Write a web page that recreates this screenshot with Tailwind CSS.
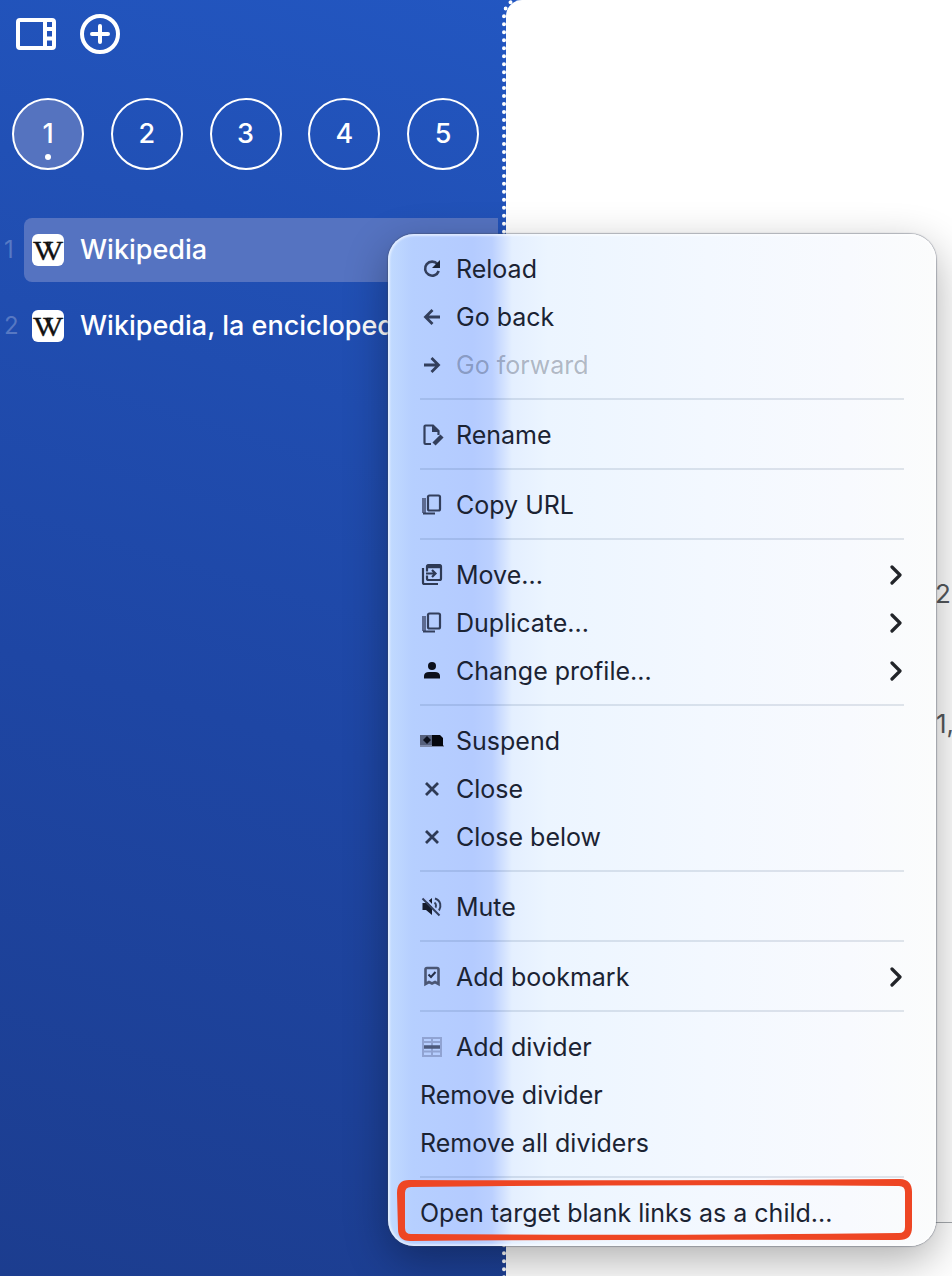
<!DOCTYPE html>
<html lang="en">
<head>
<meta charset="utf-8">
<meta name="viewport" content="width=device-width, initial-scale=1">
<title>Wikipedia</title>
<script src="https://cdn.jsdelivr.net/npm/@tailwindcss/browser@4"></script>
</head>
<body class="font-['Inter','Liberation_Sans',sans-serif]">
<svg class="hidden" aria-hidden="true">
  <symbol id="wiki" viewBox="0 0 32 32">
    <text x="1" y="26" font-family="Liberation Serif, serif" font-size="28" fill="#111" stroke="#111" stroke-width="0.500">V</text>
    <text x="11" y="26" font-family="Liberation Serif, serif" font-size="28" fill="#111" stroke="#111" stroke-width="0.500">V</text>
  </symbol>
  <symbol id="copy" viewBox="0 0 24 24">
    <rect x="8" y="2.500" width="12" height="15" rx="1.500" fill="none" stroke="#333f5c" stroke-width="2.200"/>
    <path d="M4 5v15" stroke="#5d6b91" stroke-width="4" fill="none"/>
    <path d="M3 20.500h12" stroke="#333f5c" stroke-width="2" fill="none"/>
  </symbol>
  <symbol id="cross" viewBox="0 0 24 24">
    <path d="M6 6l12 12M18 6L6 18" stroke="#2e3a55" stroke-width="2.800" fill="none"/>
  </symbol>
  <symbol id="chevron" viewBox="0 0 12 20">
    <path d="M2 2l8 8-8 8" fill="none" stroke="#222429" stroke-width="3.200" stroke-linecap="round" stroke-linejoin="round"/>
  </symbol>
</svg>

<div class="relative flex min-h-screen overflow-hidden bg-[linear-gradient(197deg,#2359c6_0%,#2150b5_28%,#1e46a4_60%,#1c3d8f_100%)]">
  <aside class="w-[502px] shrink-0 text-white">
    <header class="flex items-center gap-6 px-4 pt-3.5">
      <button type="button" aria-label="Toggle sidebar">
        <svg class="block h-10 w-10" viewBox="0 0 40 40" fill="none" stroke="#fff" stroke-width="4">
          <rect x="2" y="6" width="36" height="28" rx="2"/>
          <path d="M29 6v28M29 15h9M29 24.500h9"/>
        </svg>
      </button>
      <button type="button" aria-label="New tab">
        <svg class="block h-10 w-10" viewBox="0 0 40 40" fill="none" stroke="#fff" stroke-width="4" stroke-linecap="round">
          <circle cx="20" cy="20" r="18"/>
          <path d="M20 12v16M12 20h16"/>
        </svg>
      </button>
    </header>
    <nav class="mt-11 flex justify-between pr-[23px] pl-3 text-[27px] font-medium" aria-label="Spaces">
      <button type="button" class="relative h-18 w-18 rounded-full border-2 border-white bg-[#5573bf]">1<span class="absolute bottom-2 left-1/2 h-1.5 w-1.5 -translate-x-1/2 rounded-full bg-white"></span></button>
      <button type="button" class="h-18 w-18 rounded-full border-2 border-white">2</button>
      <button type="button" class="h-18 w-18 rounded-full border-2 border-white">3</button>
      <button type="button" class="h-18 w-18 rounded-full border-2 border-white">4</button>
      <button type="button" class="h-18 w-18 rounded-full border-2 border-white">5</button>
    </nav>
    <ol class="mt-12 space-y-3 pr-1 text-[27px] font-medium">
      <li class="flex items-center">
        <span class="w-6 pl-1 text-2xl font-normal text-white/25">1</span>
        <a href="#" class="flex h-16 min-w-0 flex-1 items-center gap-4 rounded-l-lg bg-[#5573c1] pl-2">
          <svg class="h-8 w-8 shrink-0 rounded-md bg-white" aria-hidden="true"><use href="#wiki"/></svg>
          <span class="truncate">Wikipedia</span>
        </a>
      </li>
      <li class="flex items-center">
        <span class="w-6 pl-1 text-2xl font-normal text-white/25">2</span>
        <a href="#" class="flex h-16 min-w-0 flex-1 items-center gap-4 rounded-l-lg pl-2">
          <svg class="h-8 w-8 shrink-0 rounded-md bg-white" aria-hidden="true"><use href="#wiki"/></svg>
          <span class="truncate">Wikipedia, la enciclopedia libre</span>
        </a>
      </li>
    </ol>
  </aside>

  <main class="-my-1 -mr-1 flex min-w-0 flex-1 flex-col overflow-hidden rounded-tl-[20px] border-4 border-dotted border-white bg-white bg-clip-padding pt-[574px] text-[26px] leading-10 whitespace-nowrap text-[#54585c]">
    <p class="pl-[429px]">2</p>
    <p class="mt-[90px] pl-[430px]">1,</p>
    <hr class="mt-[478px] border-[#a5a9ad]">
  </main>

  <div role="menu" class="absolute top-[234px] left-[388px] w-[548px] rounded-[26px] bg-[linear-gradient(90deg,#c2dbff_0px,#b6cfff_24px,#b4cbff_85px,#bbd0ff_104px,#e4efff_124px,#ecf5ff_160px,#f3f8ff_320px,#f8fafe_460px,#fbfcfc_548px)] pt-3 pb-2 text-[25px] text-[#1b2333] shadow-[0_0_1px_1px_rgba(60,70,90,0.35),inset_0_0_2px_2px_rgba(255,255,255,0.55),0_14px_44px_rgba(0,0,0,0.32)]">
    <button type="button" role="menuitem" class="flex h-12 w-full items-center gap-3 px-8">
      <svg class="mb-0.5 h-6 w-6" viewBox="0 0 24 24" fill="none" stroke="#333f5c" stroke-width="2.600"><path d="M17.500 7.200A7 7 0 1 0 18.700 14"/><path d="M20 3v8h-8z" fill="#1b2333" stroke="none"/></svg>
      Reload
    </button>
    <button type="button" role="menuitem" class="flex h-12 w-full items-center gap-3 px-8">
      <svg class="mb-0.5 h-6 w-6" viewBox="0 0 24 24" fill="none" stroke="#333f5c" stroke-width="2.800"><path d="M20 12H6M12.500 5l-7 7 7 7"/></svg>
      Go back
    </button>
    <button type="button" role="menuitem" disabled class="flex h-12 w-full items-center gap-3 px-8 text-[#1b2333]/30">
      <svg class="mb-0.5 h-6 w-6" viewBox="0 0 24 24" fill="none" stroke="#333f5c" stroke-width="2.800"><path d="M4 12h14M11.500 5l7 7-7 7"/></svg>
      Go forward
    </button>
    <hr class="mx-8 mt-2 mb-3 border-t-2 border-[#28466e]/13">
    <button type="button" role="menuitem" class="flex h-12 w-full items-center gap-3 px-8">
      <svg class="mb-0.5 h-6 w-6" viewBox="0 0 24 24" fill="none" stroke="#333f5c" stroke-width="2.200"><path d="M11 21H5.500a1 1 0 0 1-1-1V3.500a1 1 0 0 1 1-1H13L18.500 8v4"/><path d="M12 2v7h7z" fill="#333f5c" stroke="none"/><path d="M14 21l8-8" stroke-width="4.500"/></svg>
      Rename
    </button>
    <hr class="mx-8 mt-2 mb-3 border-t-2 border-[#28466e]/13">
    <button type="button" role="menuitem" class="flex h-12 w-full items-center gap-3 px-8">
      <svg class="mb-0.5 h-6 w-6" aria-hidden="true"><use href="#copy"/></svg>
      Copy URL
    </button>
    <hr class="mx-8 mt-2 mb-3 border-t-2 border-[#28466e]/13">
    <button type="button" role="menuitem" aria-haspopup="menu" class="flex h-12 w-full items-center gap-3 px-8">
      <svg class="mb-0.5 h-6 w-6" viewBox="0 0 24 24" fill="none" stroke="#2e3a55" stroke-width="2.200"><path d="M3 5v14.500a1.500 1.500 0 0 0 1.500 1.500H18"/><path d="M7 8.500V3.500a1.500 1.500 0 0 1 1.500-1.500h11A1.500 1.500 0 0 1 21 3.500v12a1.500 1.500 0 0 1-1.500 1.500h-11A1.500 1.500 0 0 1 7 15.500v-3"/><path d="M7 3.500h14" stroke-width="3.500"/><path d="M6 10.500h9M12 7l3.500 3.500L12 14"/></svg>
      Move...
      <svg class="mr-0.5 mb-0.5 ml-auto h-5 w-3" aria-hidden="true"><use href="#chevron"/></svg>
    </button>
    <button type="button" role="menuitem" aria-haspopup="menu" class="flex h-12 w-full items-center gap-3 px-8">
      <svg class="mb-0.5 h-6 w-6" aria-hidden="true"><use href="#copy"/></svg>
      Duplicate...
      <svg class="mr-0.5 mb-0.5 ml-auto h-5 w-3" aria-hidden="true"><use href="#chevron"/></svg>
    </button>
    <button type="button" role="menuitem" aria-haspopup="menu" class="flex h-12 w-full items-center gap-3 px-8">
      <svg class="mb-0.5 h-6 w-6" viewBox="0 0 24 24" fill="#0c101c"><circle cx="12" cy="7" r="4"/><path d="M4 19.500v-2.500c0-2.500 2-4 5-4h6c3 0 5 1.500 5 4v2.500z"/></svg>
      Change profile...
      <svg class="mr-0.5 mb-0.5 ml-auto h-5 w-3" aria-hidden="true"><use href="#chevron"/></svg>
    </button>
    <hr class="mx-8 mt-2 mb-3 border-t-2 border-[#28466e]/13">
    <button type="button" role="menuitem" class="flex h-12 w-full items-center gap-3 px-8">
      <svg class="mb-0.5 h-6 w-6" viewBox="0 0 24 24"><path d="M0 6h12v10H0z" fill="#56617d"/><path d="M0 16h24v2H0z" fill="#7d89a8"/><path d="M3 11l4-4 4 4-4 4z" fill="#0c101c"/><path d="M12 6h8l3 3v8H12z" fill="#05070d"/></svg>
      Suspend
    </button>
    <button type="button" role="menuitem" class="flex h-12 w-full items-center gap-3 px-8">
      <svg class="mb-0.5 h-6 w-6" aria-hidden="true"><use href="#cross"/></svg>
      Close
    </button>
    <button type="button" role="menuitem" class="flex h-12 w-full items-center gap-3 px-8">
      <svg class="mb-0.5 h-6 w-6" aria-hidden="true"><use href="#cross"/></svg>
      Close below
    </button>
    <hr class="mx-8 mt-2 mb-3 border-t-2 border-[#28466e]/13">
    <button type="button" role="menuitem" class="flex h-12 w-full items-center gap-3 px-8">
      <svg class="mb-0.5 h-6 w-6" viewBox="0 0 24 24" fill="none" stroke="#333f5c" stroke-width="2"><path d="M2.500 8H6l6-5v17l-6-5H2.500z" fill="#151b2b" stroke="none"/><path d="M14.500 7.500c2 1.500 2 4.500 0 6M15 3.500c6 2 6.500 8 4 12"/><path d="M4 2l17 18" stroke="#b5cbff" stroke-width="2"/><path d="M2.500 3.500l17 17"/></svg>
      Mute
    </button>
    <hr class="mx-8 mt-2 mb-3 border-t-2 border-[#28466e]/13">
    <button type="button" role="menuitem" aria-haspopup="menu" class="flex h-12 w-full items-center gap-3 px-8">
      <svg class="mb-0.5 h-6 w-6" viewBox="0 0 24 24" fill="none" stroke="#4a5674" stroke-width="2.600"><path d="M5.500 19V4.500a1.500 1.500 0 0 1 1.500-1.500h10a1.500 1.500 0 0 1 1.500 1.500V19L15 17l-3 1.500L9 17z"/><path d="M8.500 9.500l2.500 2.500 4.500-5" stroke="#26304a" stroke-width="2"/></svg>
      Add bookmark
      <svg class="mr-0.5 mb-0.5 ml-auto h-5 w-3" aria-hidden="true"><use href="#chevron"/></svg>
    </button>
    <hr class="mx-8 mt-2 mb-3 border-t-2 border-[#28466e]/13">
    <button type="button" role="menuitem" class="flex h-12 w-full items-center gap-3 px-8">
      <svg class="mb-0.5 h-6 w-6" viewBox="0 0 24 24" fill="none" stroke="#90a3d2" stroke-width="2"><path d="M3 3h18v18H3zM12 3v18M3 7h18M3 16.500h18"/><path d="M4 12h16" stroke="#4d5a7c" stroke-width="3.500"/></svg>
      Add divider
    </button>
    <button type="button" role="menuitem" class="flex h-12 w-full items-center px-8">Remove divider</button>
    <button type="button" role="menuitem" class="flex h-12 w-full items-center px-8">Remove all dividers</button>
    <hr class="mx-8 mt-2 mb-3 border-t-2 border-[#28466e]/13">
    <button type="button" role="menuitem" class="relative flex h-12 w-full items-center px-8">
      Open target blank links as a child...
      <svg class="absolute -top-[11px] left-[9px] h-[62px] w-[516px]" viewBox="0 0 516 62" fill="#ee4624" fill-rule="evenodd" aria-hidden="true">
        <path d="M0 14C0 5 4 1 12 1Q258 2 503 0C511 0 515 5 515 13L515 48C515 57 511 61 502 61Q258 60 13 62C5 62 1 58 1 50ZM8 14Q8 8 14 8Q258 5 502 7Q508 7 508 13L508 48Q508 54 502 54Q258 57 14 55Q8 55 8 49Z"/>
      </svg>
    </button>
  </div>
</div>
</body>
</html>
